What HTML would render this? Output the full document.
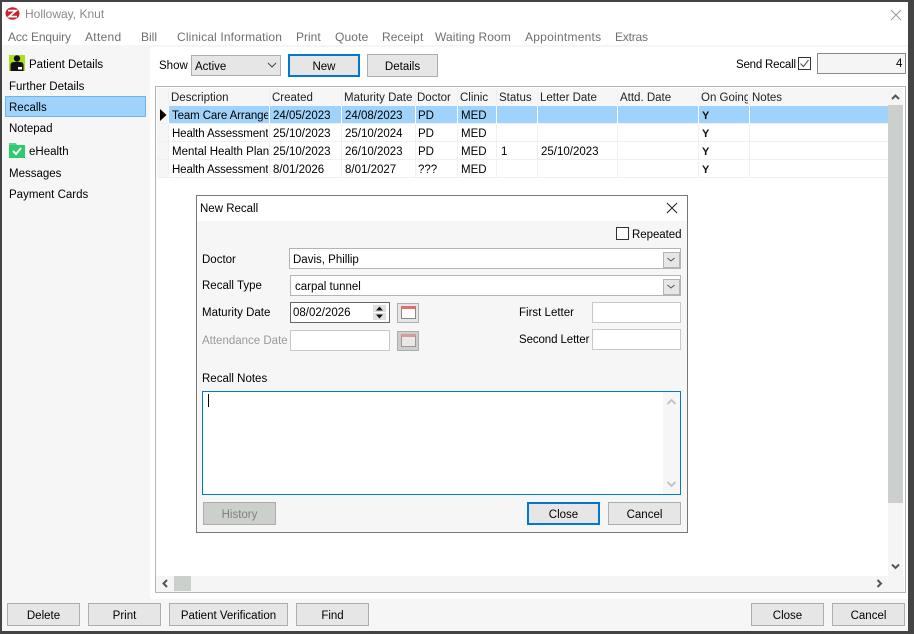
<!DOCTYPE html>
<html><head><meta charset="utf-8"><style>
html,body{margin:0;padding:0;width:914px;height:634px;overflow:hidden;background:#fff}
body{position:relative;font:11.5px/16px "Liberation Sans",sans-serif;color:#000}
div,span.t,svg{position:absolute}
.t{white-space:nowrap;position:absolute;margin-top:1px}
.m{color:#6f6f6f;top:29px;font-size:12px;margin-top:0}
.s{left:9px}
.btn{box-sizing:border-box;background:#e6e6e6;border:1px solid #adadad;text-align:center;line-height:24px;height:23px;width:73px;overflow:hidden}
.foc{border:2px solid #0078d4;line-height:22px}
.h{top:89px;color:#222}
.sep{width:1px;background:#f0f0f0;top:88px;height:90px}
.w{top:106px;height:18px;background:#fff}
.row{left:157px;width:731px;height:1px;background:#f0f0f0}
.in{box-sizing:border-box;background:#fff;border:1px solid #c8c8c8}
.y{left:702px;font-weight:bold;font-size:11px;color:#111}
.d{letter-spacing:-.12px}
</style></head><body>
<!-- frame -->
<div style="left:0;top:0;width:914px;height:2px;background:#444"></div>
<div style="left:0;top:0;width:2px;height:634px;background:#444"></div>
<div style="left:908px;top:0;width:6px;height:634px;background:#444"></div>
<div style="left:0;top:631px;width:914px;height:3px;background:#444"></div>
<!-- regions -->
<div style="left:2px;top:45px;width:906px;height:2px;background:#f5f5f5"></div>
<div style="left:2px;top:45px;width:148px;height:586px;background:#f6f6f6"></div>
<div style="left:2px;top:599px;width:906px;height:32px;background:#f6f6f6"></div>
<!-- title -->
<svg style="left:5px;top:7px" width="15" height="13" viewBox="0 0 15 13"><ellipse cx="7.5" cy="6.5" rx="7" ry="6.2" fill="#c8232c"/><path d="M3 3.6H11L4 9.600H12" fill="none" stroke="#fff" stroke-width="1.8"/></svg>
<span class="t" style="left:25px;top:6px;color:#8a8a8a;font-size:12px;margin-top:0">Holloway, Knut</span>
<svg style="left:890px;top:9px" width="12" height="12"><path d="M1 1L11 11M11 1L1 11" stroke="#999" stroke-width="1" fill="none"/></svg>
<!-- menu -->
<span class="t m" style="left:8px;letter-spacing:-.1px">Acc Enquiry</span>
<span class="t m" style="left:85px;letter-spacing:.3px">Attend</span>
<span class="t m" style="left:141px">Bill</span>
<span class="t m" style="left:177px;letter-spacing:.15px">Clinical Information</span>
<span class="t m" style="left:296px">Print</span>
<span class="t m" style="left:335px;letter-spacing:.15px">Quote</span>
<span class="t m" style="left:382px;letter-spacing:.1px">Receipt</span>
<span class="t m" style="left:435px;letter-spacing:.08px">Waiting Room</span>
<span class="t m" style="left:525px;letter-spacing:.25px">Appointments</span>
<span class="t m" style="left:615px;letter-spacing:-.2px">Extras</span>
<!-- sidebar -->
<svg style="left:9px;top:55px" width="16" height="16" viewBox="0 0 16 16"><rect width="16" height="16" fill="#a8e01c"/><circle cx="8" cy="3.500" r="3.200" fill="#111"/><path d="M1.500 16V10Q1.500 7 5 7H11Q14.500 7 14.500 10V16Z" fill="#111"/><rect x="9" y="12" width="4" height="2.500" fill="#fff"/></svg>
<span class="t" style="left:29px;top:56px">Patient Details</span>
<span class="t s" style="top:78px">Further Details</span>
<div style="left:5px;top:96px;width:139px;height:19px;background:#9fd3fb;border:1px solid #6cb4ee"></div>
<span class="t s" style="top:99px">Recalls</span>
<span class="t s" style="top:120px">Notepad</span>
<svg style="left:9px;top:143px" width="16" height="15" viewBox="0 0 16 15"><path d="M0 0H7L8 2H0Z" fill="#63cf8c"/><rect y="2" width="16" height="13" fill="#2ecb6c"/><path d="M4 8L7 11L12 5" fill="none" stroke="#fff" stroke-width="2"/></svg>
<span class="t" style="left:29px;top:143px">eHealth</span>
<span class="t s" style="top:165px">Messages</span>
<span class="t s" style="top:186px">Payment Cards</span>
<!-- toolbar -->
<span class="t" style="left:159px;top:57px">Show</span>
<div style="left:191px;top:55px;width:88px;height:19px;background:#e6e6e6;border:1px solid #adadad"></div>
<span class="t" style="left:195px;top:58px">Active</span>
<svg style="left:267px;top:62px" width="10" height="7"><path d="M1 1L5 5L9 1" fill="none" stroke="#444" stroke-width="1"/></svg>
<div class="btn foc" style="left:288px;top:54px;width:72px">New</div>
<div class="btn" style="left:367px;top:54px;width:71px">Details</div>
<span class="t" style="left:736px;top:56px;letter-spacing:-.2px">Send Recall</span>
<div style="left:798px;top:57px;width:11px;height:11px;border:1px solid #333;background:#fff"></div>
<svg style="left:798px;top:57px" width="13" height="13"><path d="M2.500 6.500L5.500 9.500L10.500 3" fill="none" stroke="#555" stroke-width="1.100"/></svg>
<div style="left:817px;top:53px;width:87px;height:19px;background:#f5f5f5;border:1px solid #8a8a8a"></div>
<span class="t" style="left:896px;top:55px">4</span>
<!-- grid -->
<div style="left:155px;top:86px;width:749px;height:505px;border:1px solid #b4b4b4;background:#fff"></div>
<div style="left:157px;top:88px;width:731px;height:18px;background:#f6f6f6"></div>
<div style="left:157px;top:106px;width:12px;height:72px;background:#f6f6f6"></div>
<div style="left:169px;top:106px;width:719px;height:17px;background:#9fd3fb"></div>
<div class="row" style="top:123px"></div><div class="row" style="top:141px"></div><div class="row" style="top:159px"></div><div class="row" style="top:177px"></div>
<div class="sep" style="left:168px"></div><div class="sep" style="left:269px"></div><div class="sep" style="left:341px"></div><div class="sep" style="left:415px"></div><div class="sep" style="left:457px"></div><div class="sep" style="left:496px"></div><div class="sep" style="left:537px"></div><div class="sep" style="left:617px"></div><div class="sep" style="left:698px"></div><div class="sep" style="left:749px"></div>
<div class="sep w" style="left:168px"></div><div class="sep w" style="left:269px"></div><div class="sep w" style="left:341px"></div><div class="sep w" style="left:415px"></div><div class="sep w" style="left:457px"></div><div class="sep w" style="left:496px"></div><div class="sep w" style="left:537px"></div><div class="sep w" style="left:617px"></div><div class="sep w" style="left:698px"></div><div class="sep w" style="left:749px"></div>
<span class="t h" style="left:171px">Description</span>
<span class="t h" style="left:272px">Created</span>
<span class="t h" style="left:344px;width:70px;overflow:hidden">Maturity Date</span>
<span class="t h" style="left:417px">Doctor</span>
<span class="t h" style="left:460px">Clinic</span>
<span class="t h" style="left:499px">Status</span>
<span class="t h" style="left:540px">Letter Date</span>
<span class="t h" style="left:620px">Attd. Date</span>
<span class="t h" style="left:701px;width:47px;overflow:hidden">On Going</span>
<span class="t h" style="left:752px">Notes</span>
<svg style="left:160px;top:109px" width="7" height="12"><path d="M0 0L6.500 6L0 12Z" fill="#000"/></svg>
<span class="t d" style="left:172px;top:107px;width:96px;overflow:hidden">Team Care Arrange</span>
<span class="t" style="left:273px;top:107px">24/05/2023</span>
<span class="t" style="left:345px;top:107px">24/08/2023</span>
<span class="t" style="left:418px;top:107px">PD</span>
<span class="t" style="left:461px;top:107px">MED</span>
<span class="t y" style="top:107px">Y</span>
<span class="t d" style="left:172px;top:125px;width:96px;overflow:hidden">Health Assessment</span>
<span class="t" style="left:273px;top:125px">25/10/2023</span>
<span class="t" style="left:345px;top:125px">25/10/2024</span>
<span class="t" style="left:418px;top:125px">PD</span>
<span class="t" style="left:461px;top:125px">MED</span>
<span class="t y" style="top:125px">Y</span>
<span class="t" style="left:172px;top:143px;width:97px;overflow:hidden">Mental Health Plan</span>
<span class="t" style="left:273px;top:143px">25/10/2023</span>
<span class="t" style="left:345px;top:143px">26/10/2023</span>
<span class="t" style="left:418px;top:143px">PD</span>
<span class="t" style="left:461px;top:143px">MED</span>
<span class="t" style="left:501px;top:143px">1</span>
<span class="t" style="left:541px;top:143px">25/10/2023</span>
<span class="t y" style="top:143px">Y</span>
<span class="t d" style="left:172px;top:161px;width:96px;overflow:hidden">Health Assessment</span>
<span class="t" style="left:273px;top:161px">8/01/2026</span>
<span class="t" style="left:345px;top:161px">8/01/2027</span>
<span class="t" style="left:418px;top:161px">???</span>
<span class="t" style="left:461px;top:161px">MED</span>
<span class="t y" style="top:161px">Y</span>
<!-- grid scrollbars -->
<div style="left:888px;top:88px;width:15px;height:488px;background:#f5f5f5"></div>
<div style="left:888px;top:105px;width:15px;height:398px;background:#ccd0cc"></div>
<svg style="left:891px;top:94px" width="9" height="7"><path d="M1 5L4.500 1.500L8 5" fill="none" stroke="#555" stroke-width="2"/></svg>
<svg style="left:891px;top:563px" width="9" height="7"><path d="M1 1.500L4.500 5L8 1.500" fill="none" stroke="#555" stroke-width="2"/></svg>
<div style="left:156px;top:576px;width:748px;height:16px;background:#f5f5f5"></div>
<div style="left:174px;top:576px;width:17px;height:15px;background:#ccd0cc"></div>
<svg style="left:162px;top:579px" width="7" height="9"><path d="M5 1L1.500 4.500L5 8" fill="none" stroke="#555" stroke-width="2"/></svg>
<svg style="left:876px;top:579px" width="7" height="9"><path d="M1.500 1L5 4.500L1.500 8" fill="none" stroke="#555" stroke-width="2"/></svg>
<!-- dialog -->
<div style="left:196px;top:195px;width:490px;height:336px;border:1px solid #777;background:#f6f6f6"></div>
<div style="left:197px;top:196px;width:490px;height:25px;background:#fff"></div>
<span class="t" style="left:200px;top:200px">New Recall</span>
<svg style="left:666px;top:202px" width="12" height="12"><path d="M1 1L11 11M11 1L1 11" stroke="#222" stroke-width="1" fill="none"/></svg>
<div style="left:616px;top:227px;width:11px;height:11px;border:1px solid #333;background:#fff"></div>
<span class="t" style="left:632px;top:226px;letter-spacing:-.05px">Repeated</span>
<span class="t" style="left:202px;top:251px">Doctor</span>
<div class="in" style="left:289px;top:248px;width:392px;height:21px;border-color:#b4b4b4"></div>
<span class="t" style="left:293px;top:251px">Davis, Phillip</span>
<div style="left:663px;top:252px;width:15px;height:14px;background:#e6e6e6;border:1px solid #b4b4b4"></div>
<svg style="left:666px;top:257px" width="10" height="6"><path d="M1.500 1L5 4L8.500 1" fill="none" stroke="#555" stroke-width="1"/></svg>
<span class="t" style="left:202px;top:277px">Recall Type</span>
<div class="in" style="left:290px;top:275px;width:391px;height:21px;border-color:#b4b4b4"></div>
<span class="t" style="left:295px;top:278px">carpal tunnel</span>
<div style="left:663px;top:279px;width:15px;height:14px;background:#e6e6e6;border:1px solid #b4b4b4"></div>
<svg style="left:666px;top:284px" width="10" height="6"><path d="M1.500 1L5 4L8.500 1" fill="none" stroke="#555" stroke-width="1"/></svg>
<span class="t" style="left:202px;top:304px">Maturity Date</span>
<div class="in" style="left:290px;top:302px;width:100px;height:21px;border-color:#666"></div>
<span class="t" style="left:293px;top:304px">08/02/2026</span>
<div style="left:373px;top:305px;width:13px;height:7px;background:#e0e0e0"></div>
<div style="left:373px;top:313px;width:13px;height:7px;background:#e0e0e0"></div>
<svg style="left:376px;top:306px" width="7" height="13"><path d="M0 4.500L3.500 0.500L7 4.500ZM0 8.500L3.500 12.500L7 8.500Z" fill="#111"/></svg>
<div style="left:397px;top:303px;width:20px;height:18px;background:#e6e6e6;border:1px solid #adadad"></div>
<div style="left:401px;top:306px;width:13px;height:9px;background:#fff;border:1px solid #888;border-top:3px solid #e86a6a"></div>
<span class="t" style="left:202px;top:332px;color:#9a9a9a">Attendance Date</span>
<div class="in" style="left:290px;top:330px;width:100px;height:21px"></div>
<div style="left:397px;top:331px;width:20px;height:18px;background:#ccd0cc;border:1px solid #adadad"></div>
<div style="left:401px;top:334px;width:13px;height:9px;background:#e8e8e8;border:1px solid #999;border-top:3px solid #d89a9a"></div>
<span class="t" style="left:519px;top:304px">First Letter</span>
<div class="in" style="left:592px;top:302px;width:89px;height:21px"></div>
<span class="t" style="left:519px;top:331px;letter-spacing:-.1px">Second Letter</span>
<div class="in" style="left:592px;top:329px;width:89px;height:21px"></div>
<span class="t" style="left:202px;top:370px">Recall Notes</span>
<div style="left:202px;top:391px;width:477px;height:102px;background:#fff;border:1px solid #0078d4"></div>
<div style="left:208px;top:394px;width:1px;height:13px;background:#000"></div>
<div style="left:663px;top:392px;width:17px;height:102px;background:#f6f6f6"></div>
<svg style="left:666px;top:398px" width="11" height="8"><path d="M1.500 6L5.500 2L9.500 6" fill="none" stroke="#c4c4c4" stroke-width="2"/></svg>
<svg style="left:666px;top:480px" width="11" height="8"><path d="M1.500 2L5.500 6L9.500 2" fill="none" stroke="#c4c4c4" stroke-width="2"/></svg>
<div class="btn" style="left:203px;top:502px;background:#ccd0cc;color:#808080">History</div>
<div class="btn foc" style="left:527px;top:502px">Close</div>
<div class="btn" style="left:608px;top:502px">Cancel</div>
<!-- bottom -->
<div class="btn" style="left:7px;top:603px">Delete</div>
<div class="btn" style="left:88px;top:603px">Print</div>
<div class="btn" style="left:169px;top:603px;width:119px">Patient Verification</div>
<div class="btn" style="left:296px;top:603px">Find</div>
<div class="btn" style="left:751px;top:603px">Close</div>
<div class="btn" style="left:832px;top:603px">Cancel</div>
</body></html>
